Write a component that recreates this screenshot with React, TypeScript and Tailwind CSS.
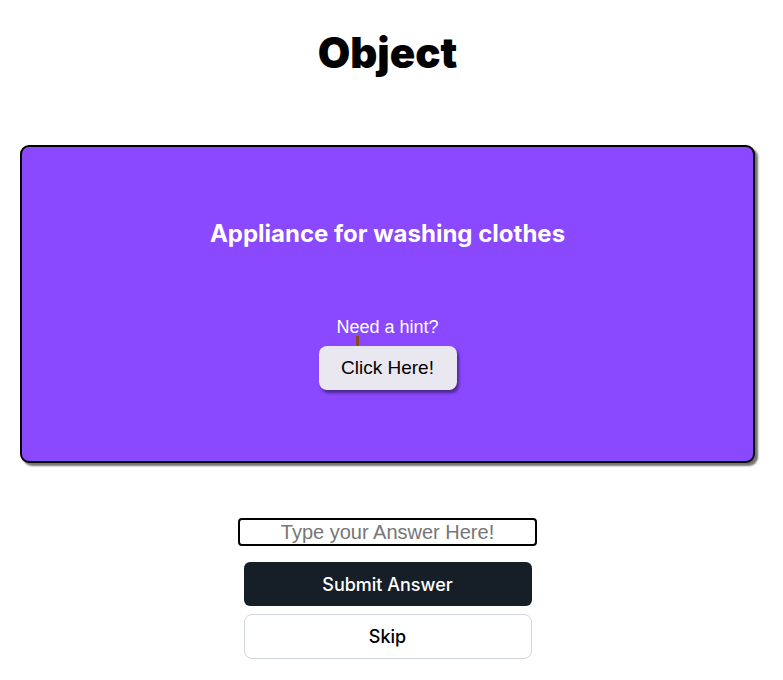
import { useState } from "react";

const App = () => {
  const [answer, setAnswer] = useState("");

  return (
    <div className="flex min-h-[680px] w-[775px] flex-col items-center bg-white font-['Inter',sans-serif]">
      <h1 className="mt-[25px] text-[42px] leading-[56px] font-black text-black">Object</h1>

      <div className="mt-[64px] flex h-[318px] w-[735px] flex-col items-center rounded-[9px] border-2 border-black bg-[#8a48ff] shadow-[3px_3px_2px_rgba(0,0,0,0.55)]">
        <h2 className="mt-[71px] text-[24px] leading-8 font-bold text-white">Appliance for washing clothes</h2>
        <p className="mt-[66px] font-['Liberation_Sans',Arial,sans-serif] text-[18px] leading-[22px] text-white">Need a hint?</p>
        <div className="relative mt-[8px]">
          <span className="absolute -top-[10px] left-[37px] h-[10px] w-[3px] bg-[#8a4a1c]" />
          <button className="h-[44px] w-[138px] rounded-lg bg-[#e9e7ef] font-['Liberation_Sans',Arial,sans-serif] text-[19px] text-black shadow-[2px_3px_3px_rgba(0,0,0,0.45)]">
            Click Here!
          </button>
        </div>
      </div>

      <input
        value={answer}
        onChange={(e) => setAnswer(e.target.value)}
        placeholder="Type your Answer Here!"
        className="mt-[55px] h-[28px] w-[299px] rounded-[4px] border-2 border-black text-center font-['Liberation_Sans',Arial,sans-serif] text-[20px] placeholder:text-[#767676]"
      />

      <div className="mt-[16px] flex w-[288px] flex-col gap-[8px]">
        <button className="h-[44px] rounded-md bg-[#161f28] text-[18px] font-medium text-white">Submit Answer</button>
        <button className="h-[45px] rounded-lg border border-gray-300 bg-white text-[18px] font-medium text-black">Skip</button>
      </div>
    </div>
  );
};

export default App;
